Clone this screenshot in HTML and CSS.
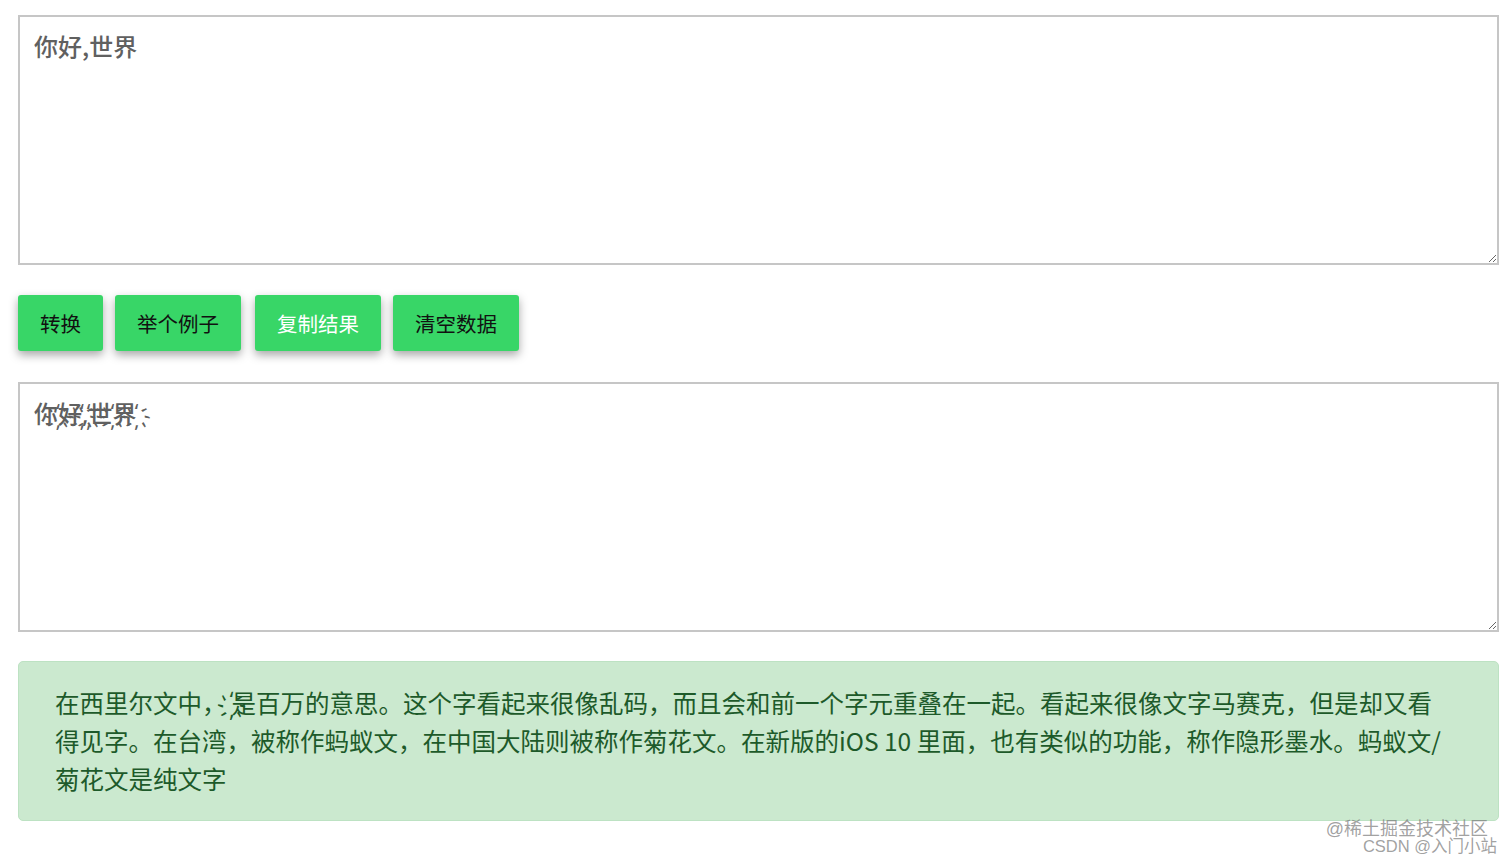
FILE: index.html
```html
<!DOCTYPE html>
<html lang="zh-CN">
<head>
    <meta charset="UTF-8">
    <meta name="viewport" content="width=device-width, initial-scale=1.0">
    <title>蚂蚁文转换</title>
    <link rel="stylesheet" href="styles.css">
</head>
<body>
    <div class="container">
        <textarea id="input" class="box">你好,世界</textarea>

        <div class="actions">
            <button class="btn">转换</button>
            <button class="btn">举个例子</button>
            <button class="btn active">复制结果</button>
            <button class="btn">清空数据</button>
        </div>

        <textarea id="output" class="box">你&#1161;好&#1161;,&#1161;世&#1161;界&#1161;</textarea>

        <div class="alert">
            在西里尔文中，&#8201;&#1161;是百万的意思。这个字看起来很像乱码，而且会和前一个字元重叠在一起。看起来很像文字马赛克，但是却又看得见字。在台湾，被称作蚂蚁文，在中国大陆则被称作菊花文。在新版的iOS 10 里面，也有类似的功能，称作隐形墨水。蚂蚁文/菊花文是纯文字
        </div>
    </div>

    <div class="watermark">
        <span class="juejin">@稀土掘金技术社区</span>
        <span class="csdn">CSDN @入门小站</span>
    </div>
</body>
</html>
```

FILE: styles.css
```css
body {
    margin: 0;
    padding: 15px 13px 0 18px;
    background: #fff;
    font-family: "Noto Sans CJK SC", "Noto Sans", sans-serif;
}
.container {
    display: flex;
    flex-direction: column;
}
.box {
    box-sizing: border-box;
    width: 100%;
    height: 250px;
    padding: 13px 14px;
    border: 2px solid #c6c6c6;
    border-radius: 0;
    font-family: "Noto Sans CJK SC", "Noto Sans", sans-serif;
    font-size: 24px;
    font-weight: 500;
    line-height: 1.3;
    color: #606060;
    resize: vertical;
    outline: none;
}
.actions {
    display: flex;
    gap: 12px;
    margin: 30px 0 31px;
}
.btn {
    height: 56px;
    padding: 0 22px;
    background: #38d667;
    color: #111;
    border: none;
    border-radius: 3px;
    box-shadow: 0 4px 10px rgba(0, 0, 0, 0.35);
    font-family: "Noto Sans CJK SC", "Noto Sans", sans-serif;
    font-size: 20.5px;
    cursor: pointer;
}
.btn.active {
    color: #fff;
    margin-left: 2px;
}
.alert {
    box-sizing: border-box;
    margin-top: 29px;
    height: 160px;
    padding: 22px 48px 0 36px;
    background: #cbe9cf;
    border: 1px solid #bde2c3;
    border-radius: 5px;
    color: #1d5a2a;
    font-size: 24.5px;
    line-height: 38px;
}
.watermark {
    position: absolute;
    right: 15px;
    top: 821px;
    display: flex;
    flex-direction: column;
    align-items: flex-end;
    font-family: "Liberation Sans", "Noto Sans CJK SC", sans-serif;
    font-size: 18px;
    line-height: 17px;
    color: rgba(120, 120, 120, 0.7);
}
.watermark .juejin {
    margin-right: 9px;
}
.watermark .csdn {
    font-size: 16.5px;
}
```
